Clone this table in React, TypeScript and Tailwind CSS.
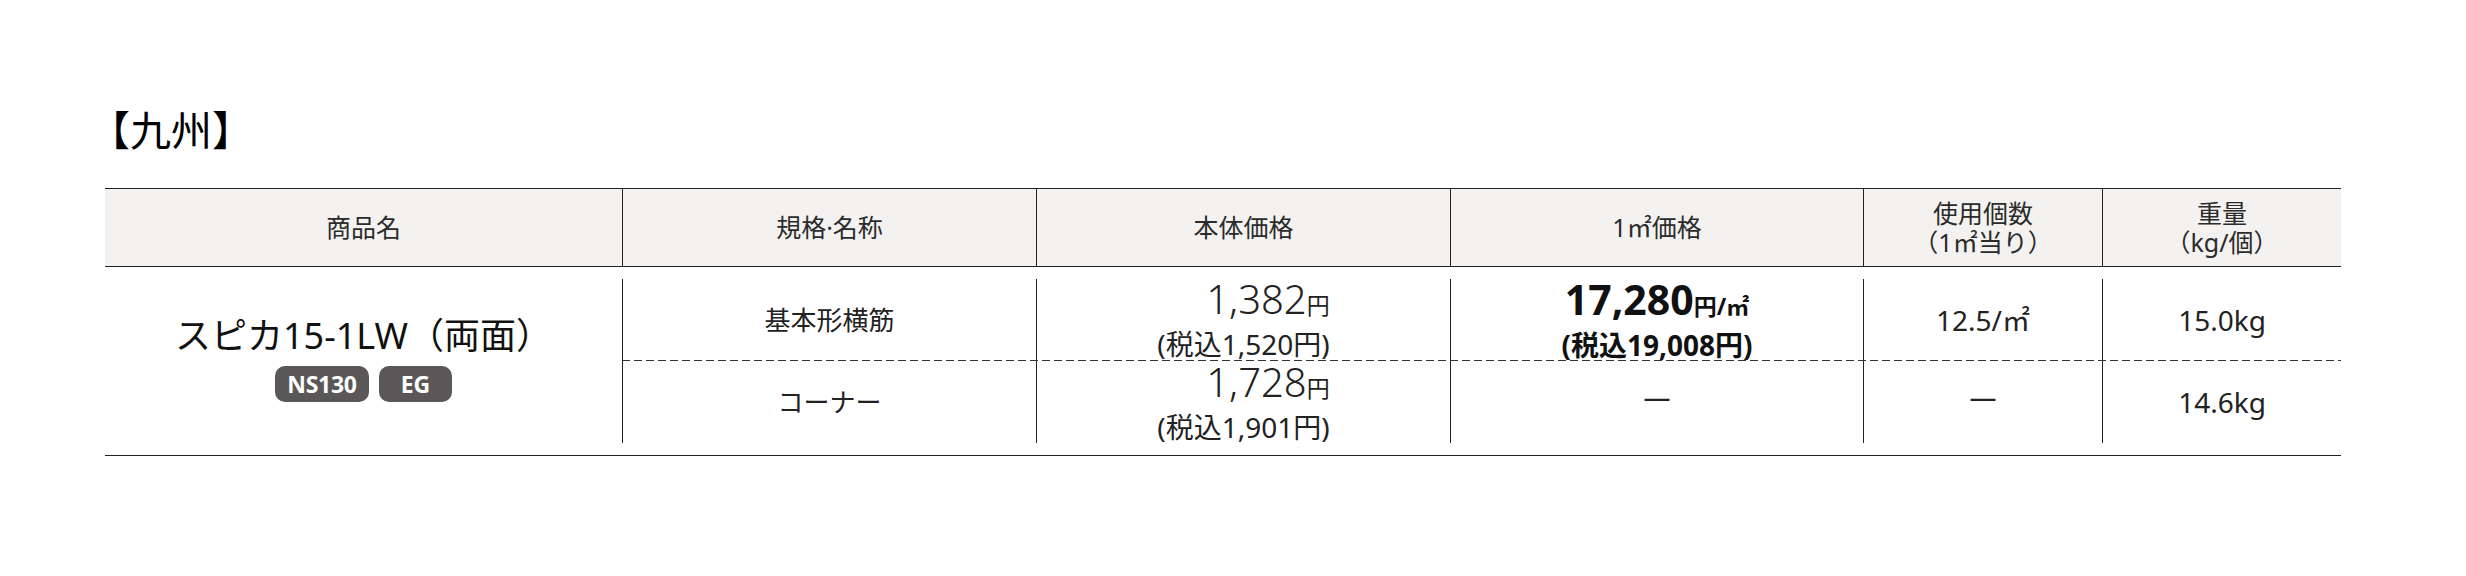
import React from "react";

const font = "font-['Noto_Sans','Noto_Sans_CJK_JP',sans-serif]";

function HeadCell({ w, children, first }: { w: string; children: React.ReactNode; first?: boolean }) {
  return (
    <div className={`${w} ${first ? "" : "border-l border-[#222]"} flex flex-col items-center justify-center text-center`}>
      {children}
    </div>
  );
}

function Cell({ w, children }: { w: string; children: React.ReactNode }) {
  return (
    <div className={`${w} border-l border-[#222] flex items-center justify-center text-center`}>
      {children}
    </div>
  );
}

function Price({ main, tax }: { main: string; tax: string }) {
  return (
    <div className="flex flex-col items-end pt-[2px]">
      <div className="text-[40px] leading-[36px] text-[#222] font-light">
        {main}
        <span className="text-[23px] font-normal">円</span>
      </div>
      <div className="mt-[5px] text-[28px] leading-[32px] text-[#222]">(税込{tax}円)</div>
    </div>
  );
}

function Dash() {
  return <span className="mb-[10px] text-[27px] leading-[28px] text-[#222]">—</span>;
}

export default function App() {
  return (
    <div className={`${font} w-[2466px] h-[576px] bg-white pt-[110px] pl-[105px]`}>
      <h2 className="-ml-[16px] text-[41px] leading-[40px] h-[40px] text-black font-normal">【九州】</h2>
      <div className="mt-[38px] w-[2236px]">
        {/* header */}
        <div className="flex h-[79px] border-y border-[#222] bg-[#f3f2f0] text-[25px] leading-[29px] text-[#2b2b2b]">
          <HeadCell w="w-[517px]" first>
            商品名
          </HeadCell>
          <HeadCell w="w-[414px]">規格·名称</HeadCell>
          <HeadCell w="w-[414px]">本体価格</HeadCell>
          <HeadCell w="w-[413px]">1㎡価格</HeadCell>
          <HeadCell w="w-[239px]">
            <span>使用個数</span>
            <span>（1㎡当り）</span>
          </HeadCell>
          <HeadCell w="w-[239px]">
            <span>重量</span>
            <span>（kg/個）</span>
          </HeadCell>
        </div>
        {/* body */}
        <div className="flex h-[189px] border-b border-[#222]">
          <div className="w-[517px] flex flex-col items-center pt-[49px]">
            <div className="text-[36px] leading-[40px] text-[#111]">スピカ15-1LW（両面）</div>
            <div className="mt-[10px] flex gap-[10px]">
              <span className="flex h-[36px] w-[94px] items-center justify-center rounded-[10px] bg-[#595757] text-[23px] font-bold leading-none text-white tracking-[-0.3px]">
                NS130
              </span>
              <span className="flex h-[36px] w-[73px] items-center justify-center rounded-[10px] bg-[#595757] text-[23px] font-bold leading-none text-white">
                EG
              </span>
            </div>
          </div>
          <div className="flex-1 flex flex-col pt-[12px]">
            <div className="flex h-[81px] text-[#222]">
              <Cell w="w-[414px]">
                <span className="text-[26px] leading-[30px]">基本形横筋</span>
              </Cell>
              <Cell w="w-[414px]">
                <Price main="1,382" tax="1,520" />
              </Cell>
              <Cell w="w-[413px]">
                <div className="flex flex-col items-center pt-[2px] font-bold text-[#111]">
                  <div className="text-[41px] leading-[36px]">
                    17,280<span className="text-[23px]">円/㎡</span>
                  </div>
                  <div className="mt-[5px] text-[28px] leading-[32px]">(税込19,008円)</div>
                </div>
              </Cell>
              <Cell w="w-[239px]">
                <span className="text-[28px] leading-[28px]">12.5/㎡</span>
              </Cell>
              <Cell w="w-[239px]">
                <span className="text-[28px] leading-[28px]">15.0kg</span>
              </Cell>
            </div>
            <div className="h-px bg-[image:repeating-linear-gradient(to_right,#333_0px,#333_8px,transparent_8px,transparent_12px)]" />
            <div className="flex h-[82px] text-[#222]">
              <Cell w="w-[414px]">
                <span className="text-[26px] leading-[30px]">コーナー</span>
              </Cell>
              <Cell w="w-[414px]">
                <Price main="1,728" tax="1,901" />
              </Cell>
              <Cell w="w-[413px]">
                <Dash />
              </Cell>
              <Cell w="w-[239px]">
                <Dash />
              </Cell>
              <Cell w="w-[239px]">
                <span className="text-[28px] leading-[28px]">14.6kg</span>
              </Cell>
            </div>
          </div>
        </div>
      </div>
    </div>
  );
}
